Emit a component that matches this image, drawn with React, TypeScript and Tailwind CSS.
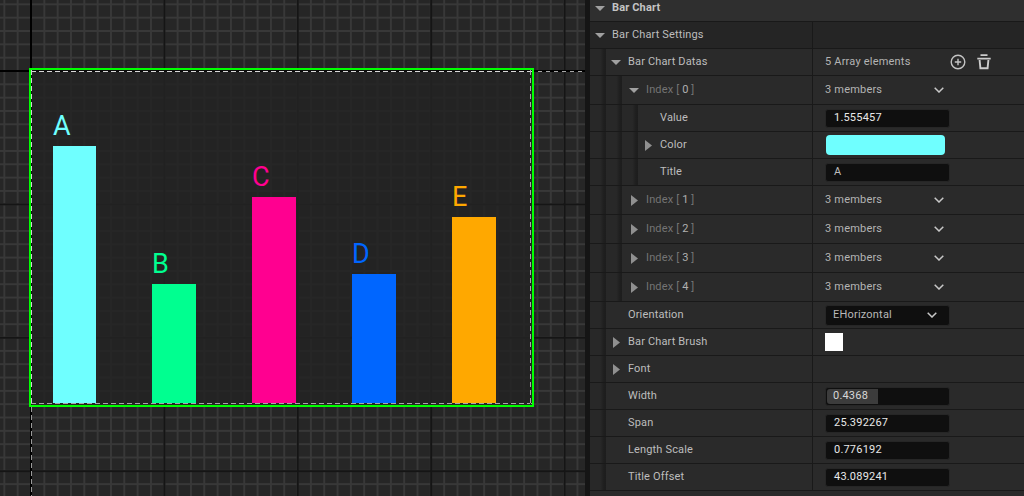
import type { ReactNode } from "react";

const bars = [
  { t: "A", w: "w-[43px]", h: "h-[258px]", bg: "bg-[#6fffff]", fg: "text-[#6fffff]" },
  { t: "B", w: "w-[44px]", h: "h-[120px]", bg: "bg-[#00ff90]", fg: "text-[#00ff90]" },
  { t: "C", w: "w-[44px]", h: "h-[207px]", bg: "bg-[#ff0090]", fg: "text-[#ff0090]" },
  { t: "D", w: "w-[44px]", h: "h-[130px]", bg: "bg-[#0066ff]", fg: "text-[#0066ff]" },
  { t: "E", w: "w-[44px]", h: "h-[187px]", bg: "bg-[#ffa800]", fg: "text-[#ffa800]" },
];

function Chevron() {
  return (
    <svg width="10" height="6" viewBox="0 0 10 6" fill="none" stroke="#c8c8c8" strokeWidth="1.5">
      <path d="M0.7 0.7 L5 5 L9.3 0.7" />
    </svg>
  );
}

function Arrow({ dir }: { dir: "down" | "right" }) {
  return dir === "down" ? (
    <svg width="10" height="5" viewBox="0 0 10 5" fill="#a0a0a0">
      <path d="M0 0 H10 L5 5 Z" />
    </svg>
  ) : (
    <svg width="7" height="11" viewBox="0 0 7 11" fill="#909090">
      <path d="M0 0 L7 5.5 L0 11 Z" />
    </svg>
  );
}

function Input({ children, text = "text-[#e8e8e8]" }: { children: ReactNode; text?: string }) {
  return (
    <div className={`flex h-[19px] w-[125px] items-center rounded-[3px] border border-[#262626] bg-[#0f0f0f] pl-[8px] text-[11px] ${text}`}>
      {children}
    </div>
  );
}

function Row({
  h,
  depth = 0,
  arrow,
  wide = false,
  bg = "bg-[#2a2a2a]",
  label,
  right,
  header = false,
}: {
  h: string;
  depth?: number;
  arrow?: "down" | "right";
  wide?: boolean;
  bg?: string;
  label: ReactNode;
  right?: ReactNode;
  header?: boolean;
}) {
  const gutters = Array.from({ length: depth });
  return (
    <div className={`flex shrink-0 border-b border-[#191919] ${h} ${bg}`}>
      <div className={`flex w-[222px] shrink-0 ${header ? "pb-[5px]" : ""}`}>
        {gutters.map((_, i) => (
          <div
            key={i}
            className="w-4 shrink-0 bg-[linear-gradient(90deg,#282828_65%,#1f1f1f_85%,#1d1d1d_100%)]"
          />
        ))}
        <div className={`flex shrink-0 items-center justify-center ${wide ? "w-6" : "mr-[2px] w-5"}`}>
          {arrow && <Arrow dir={arrow} />}
        </div>
        <div className={`flex items-center text-[11px] tracking-[0.15px] ${header ? "font-bold" : ""}`}>{label}</div>
      </div>
      {!header && (
        <div className="flex min-w-0 flex-1 items-center border-l border-[#191919] pl-[12px] text-[11px] tracking-[0.2px] text-[#b4b4b4]">
          {right}
        </div>
      )}
    </div>
  );
}

function Index({ n }: { n: number }) {
  return (
    <span className="text-[#747474]">
      Index [ <span className="text-[#b0b0b0]">{n}</span> ]
    </span>
  );
}

function Members() {
  return (
    <div className="flex w-[119px] items-center justify-between">
      <span>3 members</span>
      <Chevron />
    </div>
  );
}

export default function App() {
  return (
    <div className="flex h-[496px] w-[1024px] overflow-hidden bg-[#151515] font-['Roboto',sans-serif] text-[#bdbdbd]">
      {/* Designer canvas */}
      <div className="relative h-full w-[585px] shrink-0 bg-[#262626] bg-[linear-gradient(90deg,#151515_2px,transparent_2px),linear-gradient(#151515_2px,transparent_2px),linear-gradient(90deg,#383838_2px,transparent_2px),linear-gradient(#383838_2px,transparent_2px)] bg-[size:133.4px_133.4px,133.4px_133.4px,13.34px_13.34px,13.34px_13.34px] bg-[position:30px_70px,30px_70px,3.4px_3.4px,3.4px_3.4px] pl-[29px] pt-[68px]">
        {/* origin axes */}
        <div className="absolute left-[30px] top-0 h-[68px] w-[2px] bg-black" />
        <div className="absolute left-0 top-[70px] h-[2px] w-[29px] bg-black" />
        <div className="absolute left-[534px] top-[70px] h-[2px] w-[51px] bg-black">
          <div className="mt-[1px] h-[1px] w-full bg-[repeating-linear-gradient(90deg,#000000_0_4px,#a8a8a8_4px_8px)]" />
        </div>
        <div className="absolute left-[30px] top-[407px] h-[89px] w-[2px] bg-black">
          <div className="ml-[1px] h-full w-[1px] bg-[repeating-linear-gradient(180deg,#9a9a9a_0_5px,#000000_5px_8px)]" />
        </div>

        {/* Widget */}
        <div className="relative flex h-[339px] w-[505px] items-end gap-[56px] border-2 border-[#00ff00] bg-[#232323]/85 pb-[1px] pl-[22px]">
          {bars.map((b) => (
            <div key={b.t} className="flex flex-col items-start">
              <span className={`mb-[5px] text-[27px] font-normal leading-[30px] ${b.fg}`}>{b.t}</span>
              <div className={`${b.w} ${b.h} ${b.bg}`} />
            </div>
          ))}
          <div className="absolute left-0 top-0 h-[2px] w-full bg-[#0c0c0c]">
            <div className="mt-[1px] h-[1px] w-full bg-[repeating-linear-gradient(90deg,#d8d8d8_0_5px,#0c0c0c_5px_8px)]" />
          </div>
          <div className="absolute left-0 top-0 h-full w-[1px] bg-[repeating-linear-gradient(180deg,#d0d0d0_0_5px,#111111_5px_8px)]" />
          <div className="absolute bottom-[1px] left-0 h-[1px] w-full bg-[repeating-linear-gradient(90deg,#a8a8a8_0_5px,#222222_5px_8px)]" />
          <div className="absolute right-[1px] top-0 h-full w-[1px] bg-[repeating-linear-gradient(180deg,#a8a8a8_0_5px,#222222_5px_8px)]" />
        </div>
      </div>

      {/* Details panel */}
      <div className="ml-[5px] flex h-full flex-1 flex-col bg-[#2a2a2a]">
        <Row
          h="h-[22px]"
          bg="bg-[#2f2f2f]"
          arrow="down"
          header
          label={<span className="text-[#c4c4c4]">Bar Chart</span>}
        />
        <Row h="h-[27px]" bg="bg-[#252525]" arrow="down" label="Bar Chart Settings" />
        <Row
          h="h-[27px]"
          depth={1}
          arrow="down"
          label="Bar Chart Datas"
          right={
            <div className="flex items-center">
              <span className="w-[125px]">5 Array elements</span>
              <svg width="16" height="16" viewBox="0 0 16 16" fill="none" stroke="#c4c4c4" strokeWidth="1.4">
                <circle cx="8" cy="8" r="6.8" />
                <path d="M8 4.8 V11.2 M4.8 8 H11.2" />
              </svg>
              <svg className="ml-[11px]" width="14" height="16" viewBox="0 0 14 16" fill="none" stroke="#cccccc">
                <path d="M3.5 1.2 H10.5 M0.3 4.6 H13.7" strokeWidth="1.7" />
                <path d="M2.6 6 L3.4 14.2 H10.6 L11.4 6" strokeWidth="1.9" />
              </svg>
            </div>
          }
        />
        <Row h="h-[29px]" depth={2} wide arrow="down" label={<Index n={0} />} right={<Members />} />
        <Row h="h-[27px]" depth={3} label="Value" right={<Input>1.555457</Input>} />
        <Row
          h="h-[27px]"
          depth={3}
          arrow="right"
          label="Color"
          right={<div className="ml-[1px] h-[20px] w-[119px] rounded-[4px] bg-[#6fffff]" />}
        />
        <Row h="h-[27px]" depth={3} label="Title" right={<Input text="text-[#bdbdbd]">A</Input>} />
        {[1, 2, 3, 4].map((n) => (
          <Row key={n} h="h-[29px]" depth={2} wide arrow="right" label={<Index n={n} />} right={<Members />} />
        ))}
        <Row
          h="h-[27px]"
          depth={1}
          label="Orientation"
          right={
            <div className="flex h-[21px] w-[125px] items-center justify-between rounded-[3px] border border-[#262626] bg-[#0f0f0f] pl-[7px] pr-[12px] text-[#b8b8b8]">
              <span>EHorizontal</span>
              <Chevron />
            </div>
          }
        />
        <Row
          h="h-[27px]"
          depth={1}
          arrow="right"
          label="Bar Chart Brush"
          right={<div className="h-[18px] w-[18px] bg-white" />}
        />
        <Row h="h-[27px]" depth={1} arrow="right" label="Font" />
        <Row
          h="h-[27px]"
          depth={1}
          label="Width"
          right={
            <div className="flex h-[19px] w-[125px] items-center rounded-[3px] border border-[#262626] bg-[#0f0f0f] p-[1px] text-[11px] text-[#d8d8d8]">
              <div className="flex h-full w-[51px] items-center rounded-l-[3px] bg-[#3c3c3c] pl-[6px]">0.4368</div>
            </div>
          }
        />
        <Row h="h-[27px]" depth={1} label="Span" right={<Input>25.392267</Input>} />
        <Row h="h-[27px]" depth={1} label="Length Scale" right={<Input>0.776192</Input>} />
        <Row h="h-[27px]" depth={1} label="Title Offset" right={<Input>43.089241</Input>} />
      </div>
    </div>
  );
}
